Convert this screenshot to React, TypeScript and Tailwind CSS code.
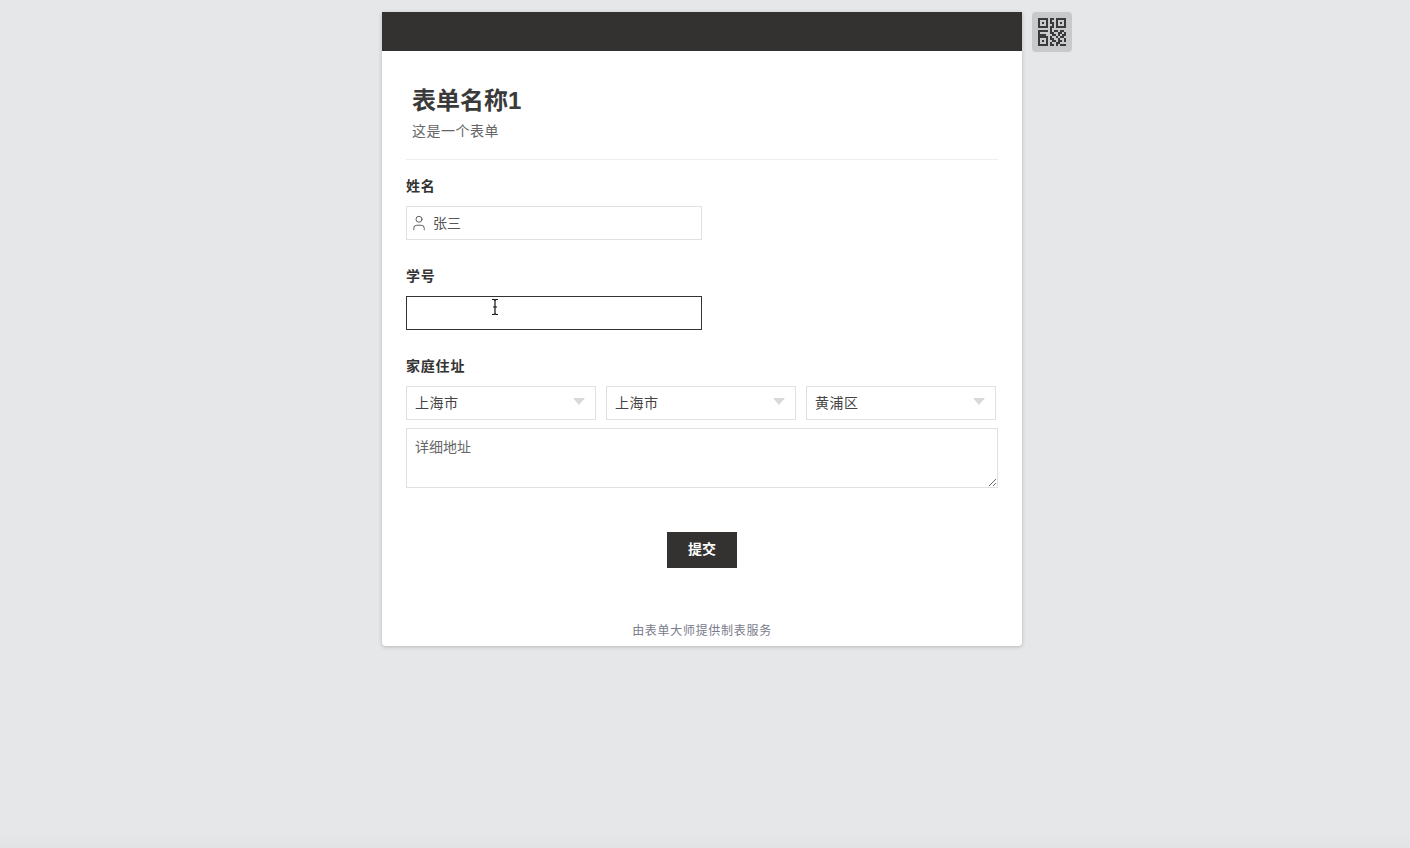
import { User } from 'lucide-react';

const FONT = "font-['Liberation_Sans','Noto_Sans_CJK_SC',sans-serif]";

const QR_ROWS = [
  '11111.11.11111',
  '1...1.1..1...1',
  '1.1.1.11.1.1.1',
  '1...1..1.1...1',
  '11111.11.11111',
  '......1.......',
  '11111.1.11.11.',
  '1.....11..11.1',
  '1111...11.1.11',
  '11111.1..1.11.',
  '1...1.11..1..1',
  '1.1.1..11.11.1',
  '1...1.1..11...',
  '11111.11.1.111',
];

function QrIcon() {
  return (
    <svg width="28" height="28" viewBox="0 0 14 14" fill="#3a3a3a" shapeRendering="crispEdges">
      {QR_ROWS.flatMap((row, y) =>
        row.split('').map((cell, x) => (cell === '1' ? <rect key={`${x}-${y}`} x={x} y={y} width="1" height="1" /> : null)),
      )}
    </svg>
  );
}

function SelectBox({ value }: { value: string }) {
  return (
    <div className="relative w-[190px] h-[34px]">
      <select
        defaultValue={value}
        className="w-full h-full appearance-none bg-white border border-[#e0e0e0] pl-2 pr-6 text-sm tracking-[0.5px] text-[#444] outline-none"
      >
        <option>{value}</option>
      </select>
      <svg className="absolute right-[11px] top-[12px]" width="12" height="7" viewBox="0 0 12 7" fill="#d8d8d8">
        <path d="M0 0h12L6 7z" />
      </svg>
    </div>
  );
}

export default function App() {
  return (
    <div className={`relative min-h-screen bg-[#e6e7e9] pt-3 pr-[6px] ${FONT}`}>
      <div className="relative w-[640px] mx-auto bg-white rounded-b shadow-[0_1px_4px_rgba(0,0,0,0.2)]">
        {/* QR code button next to the card */}
        <button className="absolute left-full top-0 ml-[10px] w-10 h-10 flex items-center justify-center rounded bg-[#c8c9ca]">
          <QrIcon />
        </button>

        <div className="h-[39px] bg-[#333230]"></div>

        <div className="px-6 pb-[5px]">
          {/* Form header */}
          <div className="pt-8 pb-[18px] px-[6px] border-b border-[#eeeeee]">
            <h1 className="text-2xl leading-9 font-bold text-[#3a3a3a]">表单名称1</h1>
            <p className="mt-[2px] text-sm leading-5 tracking-[0.5px] text-[#666]">这是一个表单</p>
          </div>

          <label className="block mt-4 mb-[10px] text-sm leading-5 font-bold tracking-[0.8px] text-[#333]">姓名</label>
          <div className="relative w-[296px] h-[34px]">
            <User className="absolute left-[4px] top-[8px] w-[18px] h-[18px] text-[#555]" strokeWidth={1.25} />
            <input
              readOnly
              value="张三"
              className="w-full h-full bg-white border border-[#e0e0e0] pl-[26px] pb-[2px] text-sm text-[#555] outline-none"
            />
          </div>

          <label className="block mt-[26px] mb-[10px] text-sm leading-5 font-bold tracking-[0.8px] text-[#333]">学号</label>
          <div className="relative w-[296px] h-[34px]">
            <input readOnly className="w-full h-full bg-white border border-[#333] px-2 text-sm outline-none" />
            {/* mouse cursor caught in the screenshot */}
            <svg className="absolute left-[84px] top-[3px]" width="10" height="16" viewBox="0 0 10 16" fill="none" stroke="#111" strokeWidth="1.2">
              <path d="M2 .5h2l1 1 1-1h2M5 1.5v13M2 15.5h2l1-1 1 1h2M3 8h4" />
            </svg>
          </div>

          <label className="block mt-[26px] mb-[10px] text-sm leading-5 font-bold tracking-[0.8px] text-[#333]">家庭住址</label>
          <div className="flex gap-[10px]">
            <SelectBox value="上海市" />
            <SelectBox value="上海市" />
            <SelectBox value="黄浦区" />
          </div>
          <textarea
            placeholder="详细地址"
            className="block w-full h-[60px] mt-2 px-2 py-2 bg-white border border-[#e0e0e0] text-sm leading-5 text-[#555] placeholder:text-[#666] outline-none"
          ></textarea>

          <div className="flex justify-center mt-11">
            <button className="w-[70px] h-9 pb-[2px] bg-[#333230] text-sm font-bold text-white">提交</button>
          </div>

          <p className="mt-[53px] text-center text-xs leading-5 tracking-[0.7px] text-[#7a7c8c]">由表单大师提供制表服务</p>
        </div>
      </div>

      {/* faint shadow along the bottom of the window */}
      <div className="absolute bottom-0 inset-x-0 h-[14px] bg-gradient-to-b from-transparent to-black/[0.02]"></div>
    </div>
  );
}
